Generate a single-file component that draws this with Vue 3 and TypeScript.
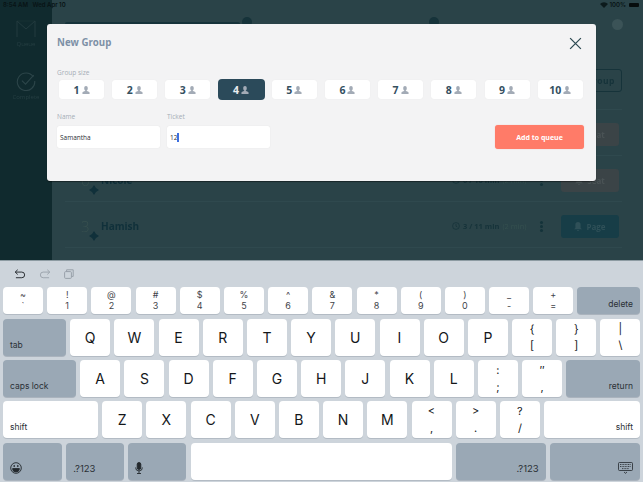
<script setup lang="ts">
import { ref } from 'vue'

interface Key {
  main?: string
  top?: string
  bottom?: string
  label?: string
  cls?: string
}

const sizes = [1, 2, 3, 4, 5, 6, 7, 8, 9, 10]
const selected = ref(4)

// first row sits completely behind the modal, so only its button shows
const groups = [
  { id: 1, num: 0, name: '', wait: '', action: 'Seat', sent: true },
  { id: 2, num: 6, name: 'Nicole', wait: '0 / 10 min', action: 'Seat', sent: true },
  { id: 3, num: 3, name: 'Hamish', wait: '3 / 11 min', action: 'Page', sent: false },
]

const letters = (s: string): Key[] => s.split('').map((c) => ({ main: c }))
const pair = (top: string, bottom: string): Key => ({ top, bottom })

const numberRow: Key[] = [
  pair('~', '`'), pair('!', '1'), pair('@', '2'), pair('#', '3'), pair('$', '4'), pair('%', '5'), pair('^', '6'),
  pair('&', '7'), pair('*', '8'), pair('(', '9'), pair(')', '0'), pair('_', '-'), pair('+', '='),
  { label: 'delete', cls: 'func right grow' },
]
const qwertyRow: Key[] = [
  { label: 'tab', cls: 'func bottom-left tab' },
  ...letters('QWERTYUIOP'),
  pair('{', '['), pair('}', ']'), pair('|', '\\'),
]
const homeRow: Key[] = [
  { label: 'caps lock', cls: 'func bottom-left caps' },
  ...letters('ASDFGHJKL'),
  pair(':', ';'), pair('″', ','),
  { label: 'return', cls: 'func bottom-right grow' },
]
const shiftRow: Key[] = [
  { label: 'shift', cls: 'light bottom-left shift' },
  ...letters('ZXCVBNM'),
  pair('<', ','), pair('>', '.'), pair('?', '/'),
  { label: 'shift', cls: 'light bottom-right grow' },
]
const keyRows = [numberRow, qwertyRow, homeRow, shiftRow]
</script>

<template>
  <div class="screen">
    <div class="app">
      <aside class="side">
        <svg class="side-logo" width="20" height="18" viewBox="0 0 20 18" fill="none" stroke="#233b3f" stroke-width="1">
          <path d="M1 17V1l9 8 9-8v16" />
          <path d="M1 1h18" opacity=".4" />
        </svg>
        <span class="side-label">Queue</span>
        <svg class="side-check" width="20" height="20" viewBox="0 0 22 22" fill="none" stroke="#2c4549" stroke-width="1.2">
          <path d="M19 6.500A9.600 9.600 0 1 0 20.600 11" />
          <path d="M6.500 10.500l4 4 9-10" />
        </svg>
        <span class="side-label">Complete</span>
      </aside>
      <main class="list">
        <div class="top">
          <div class="search"></div>
          <span class="dot"></span>
          <span class="spacer"></span>
          <span class="dot"></span>
          <span class="dot last"></span>
        </div>
        <div class="list-head"><span class="add">Add Group</span></div>
        <div v-for="g in groups" :key="g.id" class="row">
          <template v-if="g.name">
            <span class="num">{{ g.num }}</span><span class="who">{{ g.name }}</span>
            <svg class="pin" width="10" height="10" viewBox="0 0 10 10"><path d="M5 0l2 3 3 2-3 2-2 3-2-3-3-2 3-2z" fill="#10303a" /></svg>
          </template>
          <span class="wait">
            <template v-if="g.wait">
              <svg width="8" height="8" viewBox="0 0 8 8" fill="none" stroke="#16333a" stroke-width=".8"><circle cx="4" cy="4" r="3.400" /><path d="M4 2v2.200l1.400.8" /></svg>
              {{ g.wait }}
              <em>(2 min)</em>
            </template>
          </span>
          <span class="dots"></span>
          <span class="page" :class="{ sent: g.sent }">
            <svg width="8" height="9" viewBox="0 0 8 9" :fill="g.sent ? '#4a5355' : '#2f5058'"><path d="M4 0a2.600 2.600 0 0 1 2.600 2.600V6L8 7.200H0L1.400 6V2.600A2.600 2.600 0 0 1 4 0zM3 8h2a1 1 0 0 1-2 0z" /></svg>
            {{ g.action }}
          </span>
        </div>
      </main>

      <div class="status">
        <span>8:54 AM&nbsp;&nbsp;&nbsp;Wed Apr 10</span>
        <span class="status-right">
          <svg width="8" height="6" viewBox="0 0 8 6" fill="#0c1a1c"><path d="M4 6L0 2a5.700 5.700 0 0 1 8 0z" /></svg>
          100%
          <i class="battery"></i>
        </span>
      </div>

      <section class="modal">
        <header class="modal-head">
          <h2>New Group</h2>
          <svg class="close" width="13" height="13" viewBox="0 0 14 14" fill="none" stroke="#2d4a52" stroke-width="1.400">
            <path d="M1.200 1.200l11.600 11.600M12.800 1.200L1.200 12.800" />
          </svg>
        </header>
        <label class="caption size-caption">Group size</label>
        <div class="sizes">
          <button v-for="n in sizes" :key="n" class="size" :class="{ active: selected === n }" @click="selected = n">
            <span>{{ n }}</span>
            <svg width="8" height="8" viewBox="0 0 9 9" fill="#a3abb6">
              <path d="M4.500 0C5.800 0 6.500 1 6.500 2.400 6.500 3.600 6 4.600 5.400 5v.7c1.600.4 3.100.9 3.100 1.800V9H.5V7.500c0-.9 1.500-1.400 3.100-1.800V5C3 4.600 2.500 3.600 2.500 2.400 2.500 1 3.200 0 4.500 0z" />
            </svg>
          </button>
        </div>
        <div class="form">
          <div class="field">
            <label class="caption">Name</label>
            <div class="input">Samantha</div>
          </div>
          <div class="field">
            <label class="caption">Ticket</label>
            <div class="input">12<i class="caret"></i></div>
          </div>
          <button class="submit">Add to queue</button>
        </div>
      </section>
    </div>

    <div class="keyboard">
      <div class="tools">
        <svg width="12" height="10" viewBox="0 0 13 11" fill="none" stroke="#1d2126" stroke-width="1">
          <path d="M4 .8L1.200 3.400 4 6" /><path d="M1.500 3.400h7a3.100 3.100 0 0 1 0 6.200H2" />
        </svg>
        <svg width="12" height="10" viewBox="0 0 13 11" fill="none" stroke="#99a1aa" stroke-width="1">
          <path d="M9 .8l2.800 2.600L9 6" /><path d="M11.500 3.400h-7a3.100 3.100 0 0 0 0 6.200H11" />
        </svg>
        <svg width="10" height="10" viewBox="0 0 10 10" fill="none" stroke="#99a1aa" stroke-width="1">
          <rect x=".6" y="2.600" width="6.800" height="6.800" rx="1" /><path d="M2.600 2.600V.8h6.600v6.600H7.400" />
        </svg>
      </div>
      <div v-for="(row, i) in keyRows" :key="i" class="key-row" :class="{ first: i === 0 }">
        <div v-for="(k, j) in row" :key="j" class="key" :class="k.cls">
          <template v-if="k.main">{{ k.main }}</template>
          <template v-else-if="k.top">
            <span>{{ k.top }}</span><span>{{ k.bottom }}</span>
          </template>
          <span v-else class="key-label">{{ k.label }}</span>
        </div>
      </div>
      <div class="key-row">
        <div class="key func bottom-left emoji">
          <svg width="12" height="12" viewBox="0 0 12 12" fill="none" stroke="#23282d" stroke-width=".9">
            <circle cx="6" cy="6" r="5.300" />
            <path d="M2.600 6.600h6.800A3.400 3.400 0 0 1 2.600 6.600z" fill="#23282d" />
            <circle cx="4.200" cy="4" r=".5" fill="#23282d" /><circle cx="7.800" cy="4" r=".5" fill="#23282d" />
          </svg>
        </div>
        <div class="key func bottom-left num-key"><span class="key-label big">.?123</span></div>
        <div class="key func bottom-left mic">
          <svg width="8" height="12" viewBox="0 0 8 12" fill="none" stroke="#23282d" stroke-width=".9">
            <rect x="2.200" y=".5" width="3.600" height="7" rx="1.800" fill="#23282d" />
            <path d="M.6 5.500a3.400 3.400 0 0 0 6.800 0M4 9v2.500M2 11.500h4" />
          </svg>
        </div>
        <div class="key light space"></div>
        <div class="key func bottom-right num-right"><span class="key-label big">.?123</span></div>
        <div class="key func bottom-right grow">
          <svg width="15" height="12" viewBox="0 0 15 12" fill="none" stroke="#23282d" stroke-width=".8">
            <rect x=".5" y=".5" width="14" height="8" rx="1" />
            <path d="M2 2.500h11M2 4.500h11M4 6.600h7" stroke-dasharray="1 .6" />
            <path d="M6 10l1.500 1.300L9 10" />
          </svg>
        </div>
      </div>
    </div>
  </div>
</template>

<style scoped>
.screen {
  width: 643px;
  height: 482px;
  display: flex;
  flex-direction: column;
  overflow: hidden;
  font-family: "Open Sans", "Liberation Sans", sans-serif;
}

/* app dimmed behind the modal */
.app {
  position: relative;
  height: 260px;
  flex: none;
  display: flex;
  background: #2a4348;
  border-bottom: 1px solid #8d9ba2;
  box-sizing: content-box;
}
.side {
  width: 52px;
  flex: none;
  background: #102a2e;
  display: flex;
  flex-direction: column;
  align-items: center;
  padding-top: 20px;
  box-sizing: border-box;
  filter: blur(.4px);
}
.side-label {
  font-size: 6px;
  line-height: 8px;
  color: #263f43;
  margin-top: 2px;
}
.side-check {
  margin-top: 23px;
}

.list {
  flex: 1;
  padding: 22px 21px 0 13px;
  filter: blur(.5px);
  color: #16333a;
}
.top {
  display: flex;
  align-items: flex-start;
}
.search {
  width: 175px;
  height: 10px;
  background: #16333a;
  border-radius: 2px;
}
.dot {
  width: 10px;
  height: 10px;
  border-radius: 50%;
  background: #16333a;
  margin: -5px 0 0 2px;
}
.spacer {
  width: 175px;
}
.dot.last {
  margin: -3px -1px 0 auto;
  background: #3b5357;
  width: 11px;
  height: 11px;
}
.list-head {
  display: flex;
  justify-content: flex-end;
  padding-top: 37px;
  padding-bottom: 17px;
  border-bottom: 1px solid #2f494e;
}
.add {
  width: 90px;
  height: 23px;
  line-height: 21px;
  box-sizing: border-box;
  border: 1px solid #16333a;
  border-radius: 3px;
  padding-right: 6px;
  font-size: 8.500px;
  font-weight: 700;
  letter-spacing: .5px;
  text-align: right;
}
.row {
  position: relative;
  height: 46px;
  display: flex;
  align-items: center;
  border-bottom: 1px solid #2f494e;
  box-sizing: border-box;
  padding: 3px 0 0 16px;
}
.num {
  font-size: 15px;
  font-weight: 300;
  color: #38504f;
  width: 20px;
}
.who {
  font-size: 10px;
  font-weight: 700;
  color: #10303a;
}
.pin {
  position: absolute;
  left: 24px;
  top: 29px;
}
.wait {
  margin-left: auto;
  display: flex;
  align-items: center;
  gap: 3px;
  width: 88px;
  font-size: 7.500px;
  font-weight: 700;
  white-space: nowrap;
}
.wait em {
  font-style: normal;
  font-weight: 400;
  color: #35504f;
}
.dots {
  width: 3px;
  height: 3px;
  background: #14333a;
  border-radius: 50%;
  box-shadow: 0 -4px 0 #14333a, 0 4px 0 #14333a;
  margin-right: 18px;
}
.page {
  width: 58px;
  height: 23px;
  border-radius: 3px;
  background: #173d47;
  color: #2f5058;
  font-size: 8px;
  font-weight: 700;
  display: flex;
  align-items: center;
  justify-content: center;
  gap: 4px;
  margin-right: 3px;
}
.page.sent {
  background: #3b4447;
  color: #4a5355;
}

.status {
  position: absolute;
  left: 3px;
  right: 4px;
  top: 1px;
  display: flex;
  justify-content: space-between;
  font-size: 6px;
  line-height: 8px;
  font-weight: 600;
  color: #081315;
  font-family: "Inter", sans-serif;
}
.status-right {
  display: flex;
  align-items: center;
  gap: 2px;
}
.battery {
  width: 10px;
  height: 4px;
  background: #060c0d;
  border-radius: 1px;
  margin-left: 1px;
}

.modal {
  position: absolute;
  left: 47px;
  top: 24px;
  width: 549px;
  height: 157px;
  box-sizing: border-box;
  padding: 12px 12px 0 10px;
  background: #f3f3f4;
  border-radius: 3px;
  box-shadow: 0 1px 1px rgba(0, 0, 0, .45);
}
.modal-head {
  display: flex;
  justify-content: space-between;
  align-items: flex-start;
  height: 13px;
}
.modal-head h2 {
  margin: 0;
  font-size: 9.700px;
  line-height: 13px;
  font-weight: 700;
  color: #7d90a6;
}
.close {
  margin: 1px 2px 0 0;
}
.caption {
  display: block;
  font-size: 6.500px;
  line-height: 10px;
  color: #a5adb6;
}
.size-caption {
  margin-top: 19px;
}
.sizes {
  display: flex;
  gap: 8.200px;
  margin-top: 2px;
  padding-left: 2px;
}
.size {
  width: 45px;
  height: 19px;
  padding: 0;
  border: 0;
  border-radius: 3px;
  background: #fff;
  font-family: inherit;
  font-size: 10.500px;
  font-weight: 700;
  color: #35505f;
  display: flex;
  align-items: center;
  justify-content: center;
  gap: 2px;
  box-shadow: 0 0 1px rgba(0, 0, 0, .08);
}
.size.active {
  background: #2b4a5a;
  color: #e9edf0;
  box-shadow: 0 0 0 1px #2b4a5a;
}
.form {
  display: flex;
  align-items: flex-end;
  gap: 7px;
  margin-top: 13px;
}
.field {
  width: 103px;
  padding-bottom: 1px;
}
.input {
  height: 22px;
  margin-top: 4px;
  padding-left: 3px;
  display: flex;
  align-items: center;
  background: #fff;
  border-radius: 2px;
  box-shadow: 0 0 1px rgba(0, 0, 0, .12);
  font-size: 6.500px;
  color: #2c3035;
}
.caret {
  width: 1.500px;
  height: 9px;
  background: #3d6fe0;
}
.submit {
  width: 89px;
  height: 24px;
  margin-left: auto;
  border: 0;
  border-radius: 3px;
  background: #ff7b68;
  color: #fff;
  font-family: inherit;
  font-size: 7px;
  font-weight: 700;
  box-shadow: 0 0 1px rgba(255, 123, 104, .6);
}

/* keyboard */
.keyboard {
  flex: 1;
  min-height: 0;
  background: #cdd4db;
  padding: 0 3px;
  font-family: "Inter", "Liberation Sans", sans-serif;
  color: #14171a;
}
.tools {
  height: 26px;
  display: flex;
  align-items: center;
  gap: 13px;
  padding-left: 11px;
  box-sizing: border-box;
}
.key-row {
  display: flex;
  gap: 4.200px;
  height: 37px;
  margin-bottom: 4.200px;
}
.key-row.first {
  height: 27px;
  margin-bottom: 5px;
}
.key {
  width: 40px;
  flex: none;
  box-sizing: border-box;
  background: #fff;
  border-radius: 4px;
  display: flex;
  flex-direction: column;
  align-items: center;
  justify-content: space-evenly;
  font-size: 14px;
  box-shadow: 0 1px 0 #b3bbc4;
}
.key-row.first .key {
  font-size: 9px;
  line-height: 10px;
  color: #3f444a;
  padding: 1px 0;
}
.key-row:not(.first) .key > span:not(.key-label) {
  font-size: 11px;
  line-height: 13px;
}
.func {
  background: #9aa8b5;
  box-shadow: 0 1px 0 #aab3bd;
}
.grow {
  flex: 1;
  width: auto;
}
.key-label {
  font-size: 8.500px;
  color: #2b3036;
}
.key-label.big {
  font-size: 9.500px;
}
.key.bottom-left,
.key.bottom-right,
.key.right {
  flex-direction: row;
  padding: 0 7px 6px;
  align-items: flex-end;
  justify-content: flex-start;
}
.key.bottom-right,
.key.right {
  justify-content: flex-end;
}
.key-row.first .key.right {
  padding: 0 7px 5px 0;
}
.light {
  background: #fff;
}
.tab { width: 63px; }
.caps { width: 73px; }
.shift { width: 95px; }
.emoji { width: 59px; }
.num-key { width: 58px; }
.mic { width: 58px; }
.space { width: 261px; }
.num-right { width: 90px; }
</style>
